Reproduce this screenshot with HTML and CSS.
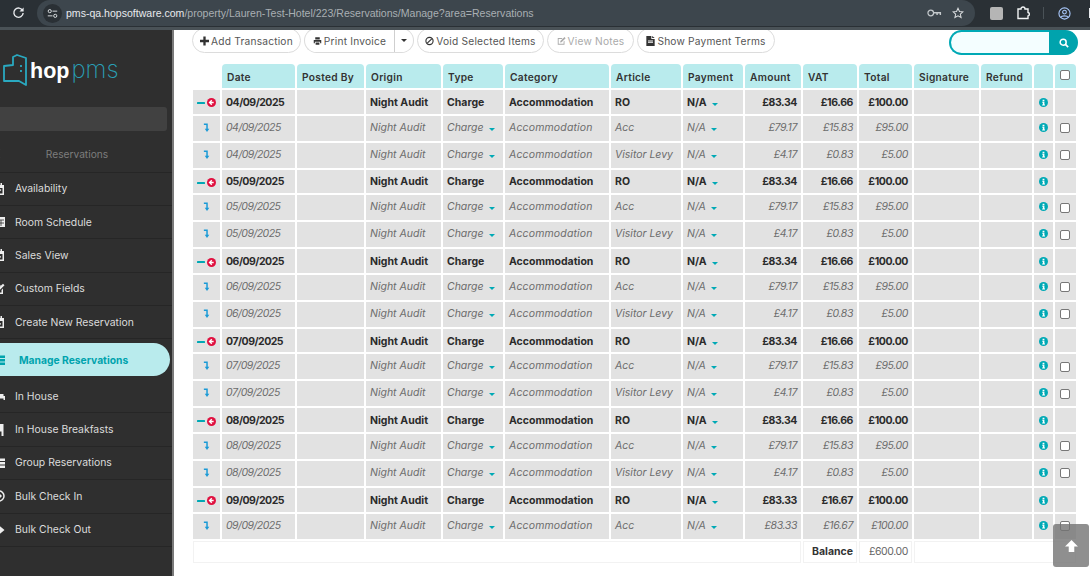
FILE: index.html
```html
<!DOCTYPE html>
<html lang="en">
<head>
<meta charset="utf-8">
<title>Manage Reservations</title>
<link rel="stylesheet" href="styles.css">
</head>
<body>
<svg class="defs" width="0" height="0" aria-hidden="true">
  <symbol id="i-minus" viewBox="0 0 8 8"><rect x="0" y="3" width="8" height="2" rx=".5" fill="#00a9b5"/></symbol>
  <symbol id="i-back" viewBox="0 0 10 10"><circle cx="5" cy="5" r="5" fill="#e0103f"/><path d="M5.3 2.4 2.8 5l2.5 2.6M3 5h4.4" fill="none" stroke="#fff" stroke-width="1.5"/></symbol>
  <symbol id="i-turn" viewBox="0 0 8 10"><path d="M1 1.2h3.6v6" fill="none" stroke="#1b9ad6" stroke-width="1.7"/><path d="M2 6.5h5.2L4.6 10z" fill="#1b9ad6"/></symbol>
  <symbol id="i-info" viewBox="0 0 10 10"><circle cx="5" cy="5" r="5" fill="#00a9b5"/><path d="M4 2h2v1.500H4zM3.600 4.200H6v3h.7v1H3.500v-1h.8v-2h-.7z" fill="#fff"/></symbol>
  <symbol id="i-cal" viewBox="0 0 12 12"><path d="M1 2h10v10H1zM3 0h1.500v3H3zM7.500 0H9v3H7.500z" fill="#eee"/><rect x="2.500" y="5" width="7" height="5.500" fill="#2f2f2f"/><path d="m4 7.500 1.500 1.500L8 6.500" fill="none" stroke="#eee" stroke-width="1.200"/></symbol>
  <symbol id="i-plus-cal" viewBox="0 0 12 12"><path d="M1 2h10v10H1zM3 0h1.500v3H3zM7.500 0H9v3H7.500z" fill="#eee"/><rect x="2.500" y="5" width="7" height="5.500" fill="#2f2f2f"/><path d="M6 5.800v4M4 7.800h4" stroke="#eee" stroke-width="1.200"/></symbol>
  <symbol id="i-grid" viewBox="0 0 12 12"><path d="M0 1h12v10H0z" fill="#eee"/><path d="M1 4h10M1 7h10M4 4v6M8 4v6" stroke="#2f2f2f" stroke-width=".8"/></symbol>
  <symbol id="i-edit" viewBox="0 0 12 12"><path d="M1 2h7L6.500 3.500H2.500v6h6V7L10 5.500V11H1z" fill="#eee"/><path d="M4.500 6 10 .7 11.500 2.200 6 7.700 4.200 8z" fill="#eee"/></symbol>
  <symbol id="i-list" viewBox="0 0 12 12"><path d="M0 1.500h3v2.500H0zM4 1.500h8v2.500H4zM0 5h3v2.500H0zM4 5h8v2.500H4zM0 8.500h3V11H0zM4 8.500h8V11H4z" fill="currentColor"/></symbol>
  <symbol id="i-bed" viewBox="0 0 12 12"><path d="M0 3h1.500v3H12v4h-1.500V8.500h-9V10H0z" fill="#eee"/><path d="M3 4h7.500v2H3z" fill="#eee"/></symbol>
  <symbol id="i-food" viewBox="0 0 12 12"><path d="M7 0h3.500v12H8.500V7.500H7zM0 0h1v3h.8V0h1v3h.8V0h1v4.500L3.500 6v6h-1.500V6L0 4.500z" fill="#eee"/></symbol>
  <symbol id="i-signin" viewBox="0 0 12 12"><circle cx="6" cy="6" r="5" fill="none" stroke="#eee" stroke-width="1.500"/><path d="M6 3 9 6 6 9zM3 5h3v2H3z" fill="#eee"/></symbol>
  <symbol id="i-signout" viewBox="0 0 12 12"><path d="M6 1.500 11.500 6 6 10.500V8H1V4h5z" fill="#eee"/></symbol>
  <symbol id="i-plus" viewBox="0 0 10 10"><path d="M3.700 0h2.600v3.700H10v2.600H6.300V10H3.700V6.300H0V3.700h3.700z" fill="currentColor"/></symbol>
  <symbol id="i-print" viewBox="0 0 12 12"><path d="M3 1h6v3H3zM1 4.500h10V9H9.500V7h-7v2H1zM3.500 8h5v3h-5z" fill="currentColor"/></symbol>
  <symbol id="i-ban" viewBox="0 0 12 12"><circle cx="6" cy="6" r="4.800" fill="none" stroke="currentColor" stroke-width="1.500"/><path d="M2.700 9.300 9.300 2.700" stroke="currentColor" stroke-width="1.500"/></symbol>
  <symbol id="i-note" viewBox="0 0 12 12"><path d="M1 2h6.500L6.300 3.200H2.200v6.600h6.600V6.700L10 5.500V11H1z" fill="currentColor"/><path d="M4.500 6 10 .7 11.500 2.200 6 7.700 4.200 8z" fill="currentColor"/></symbol>
  <symbol id="i-file" viewBox="0 0 10 12"><path d="M0 0h6v3.500h4V12H0zM7 0l3 2.500H7zM2 5.500h6v1H2zM2 7.500h6v1H2z" fill="currentColor" fill-rule="evenodd"/></symbol>
  <symbol id="i-search" viewBox="0 0 12 12"><circle cx="5" cy="5" r="3.600" fill="none" stroke="#fff" stroke-width="1.800"/><path d="m7.700 7.700 3.300 3.300" stroke="#fff" stroke-width="2"/></symbol>
</svg>

<div class="app">
  <header class="browser">
    <svg class="reload" viewBox="0 0 14 14"><path d="M11.500 5A5 5 0 1 0 12 7.500" fill="none" stroke="#e8eaed" stroke-width="1.500"/><path d="M12.500 1.500v4.500H8z" fill="#e8eaed"/></svg>
    <div class="omnibox">
      <span class="tune"><svg viewBox="0 0 14 14"><circle cx="3.500" cy="4" r="2" fill="none" stroke="#dfe3e6" stroke-width="1.200"/><path d="M7 4h6M1 10h6" stroke="#dfe3e6" stroke-width="1.200"/><circle cx="10.500" cy="10" r="2" fill="none" stroke="#dfe3e6" stroke-width="1.200"/></svg></span>
      <span class="url"><b>pms-qa.hopsoftware.com</b>/property/Lauren-Test-Hotel/223/Reservations/Manage?area=Reservations</span>
      <svg class="omni-icon key" viewBox="0 0 16 10"><circle cx="4" cy="5" r="3" fill="none" stroke="#c4c9cc" stroke-width="1.300"/><path d="M7 4h8v3h-1.500V5.500h-2V7H10V5.500H7z" fill="#c4c9cc"/></svg>
      <svg class="omni-icon star" viewBox="0 0 14 14"><path d="m7 1.500 1.700 3.700 4 .4-3 2.700.9 4L7 10.300l-3.600 2 .9-4-3-2.700 4-.4z" fill="none" stroke="#d9dcde" stroke-width="1.200"/></svg>
    </div>
    <div class="browser-tools">
      <span class="ext-badge"></span>
      <svg class="puzzle" viewBox="0 0 14 14"><path d="M2 3h3a2 2 0 0 1 4 0h3v3.500a1.800 1.800 0 0 1 0 3.500v2.500H2z" fill="none" stroke="#f1f3f4" stroke-width="1.400"/></svg>
      <span class="tool-sep"></span>
      <svg class="profile" viewBox="0 0 14 14"><circle cx="7" cy="7" r="6" fill="none" stroke="#a8c7fa" stroke-width="1.200"/><circle cx="7" cy="5.500" r="2" fill="none" stroke="#a8c7fa" stroke-width="1.200"/><path d="M3 11c1-2 7-2 8 0" fill="none" stroke="#a8c7fa" stroke-width="1.200"/></svg>
      <span class="kebab"></span>
    </div>
  </header>

  <div class="workspace">
    <aside class="sidebar">
      <div class="logo">
        <svg class="logo-mark" viewBox="0 0 24 34"><path d="M1 12 10 11V3l4-2 9 3v27l-7-4H1z" fill="none" stroke="#2aa9c0" stroke-width="1.800" stroke-linejoin="round"/><path d="M18 11v2M18 16v2" stroke="#2aa9c0" stroke-width="1.800"/></svg>
        <span class="logo-hop">hop</span><span class="logo-pms">pms</span>
      </div>
      <div class="side-search"></div>
      <div class="side-title"><span class="chev"></span><span>Reservations</span></div>
      <nav class="menu">
        <a class="menu-item"><svg><use href="#i-cal"/></svg>Availability</a>
        <a class="menu-item"><svg><use href="#i-grid"/></svg>Room Schedule</a>
        <a class="menu-item"><svg><use href="#i-plus-cal"/></svg>Sales View</a>
        <a class="menu-item"><svg><use href="#i-edit"/></svg>Custom Fields</a>
        <a class="menu-item"><svg><use href="#i-plus-cal"/></svg>Create New Reservation</a>
        <a class="menu-item active"><svg><use href="#i-list"/></svg>Manage Reservations</a>
        <a class="menu-item"><svg><use href="#i-bed"/></svg>In House</a>
        <a class="menu-item"><svg><use href="#i-food"/></svg>In House Breakfasts</a>
        <a class="menu-item"><svg><use href="#i-list"/></svg>Group Reservations</a>
        <a class="menu-item"><svg><use href="#i-signin"/></svg>Bulk Check In</a>
        <a class="menu-item"><svg><use href="#i-signout"/></svg>Bulk Check Out</a>
      </nav>
    </aside>

    <main class="content">
      <div class="toolbar">
        <button class="btn add"><svg><use href="#i-plus"/></svg>Add Transaction</button>
        <div class="split">
          <button class="btn split-main"><svg><use href="#i-print"/></svg>Print Invoice</button>
          <button class="btn split-caret"><span class="caret dark"></span></button>
        </div>
        <button class="btn void"><svg><use href="#i-ban"/></svg>Void Selected Items</button>
        <button class="btn notes"><svg><use href="#i-note"/></svg>View Notes</button>
        <button class="btn terms"><svg><use href="#i-file"/></svg>Show Payment Terms</button>
        <div class="search"><span class="search-field"></span><span class="search-btn"><svg><use href="#i-search"/></svg></span></div>
      </div>

      <table class="ledger">
        <colgroup>
          <col class="c0"><col class="c1"><col class="c2"><col class="c3"><col class="c4"><col class="c5"><col class="c6"><col class="c7"><col class="c8"><col class="c9"><col class="c10"><col class="c11"><col class="c12"><col class="c13"><col class="c14">
        </colgroup>
        <thead>
          <tr><th class="blank"></th><th>Date</th><th>Posted By</th><th>Origin</th><th>Type</th><th>Category</th><th>Article</th><th>Payment</th><th>Amount</th><th>VAT</th><th>Total</th><th>Signature</th><th>Refund</th><th></th><th class="chk-head"><span class="check"></span></th></tr>
        </thead>
        <tbody>
          <tr class="group"><td class="ctl"><svg class="minus"><use href="#i-minus"/></svg><svg class="back"><use href="#i-back"/></svg></td><td class="date">04/09/2025</td><td></td><td>Night Audit</td><td>Charge</td><td class="cat">Accommodation</td><td>RO</td><td>N/A<span class="caret"></span></td><td class="num">£83.34</td><td class="num">£16.66</td><td class="num">£100.00</td><td></td><td></td><td class="ctl"><svg class="info"><use href="#i-info"/></svg></td><td></td></tr>
          <tr class="sub"><td class="ctl"><svg class="turn"><use href="#i-turn"/></svg></td><td class="date">04/09/2025</td><td></td><td>Night Audit</td><td>Charge<span class="caret"></span></td><td class="cat">Accommodation</td><td>Acc</td><td>N/A<span class="caret"></span></td><td class="num">£79.17</td><td class="num">£15.83</td><td class="num">£95.00</td><td></td><td></td><td class="ctl"><svg class="info"><use href="#i-info"/></svg></td><td class="ctl"><span class="check"></span></td></tr>
          <tr class="sub"><td class="ctl"><svg class="turn"><use href="#i-turn"/></svg></td><td class="date">04/09/2025</td><td></td><td>Night Audit</td><td>Charge<span class="caret"></span></td><td class="cat">Accommodation</td><td>Visitor Levy</td><td>N/A<span class="caret"></span></td><td class="num">£4.17</td><td class="num">£0.83</td><td class="num">£5.00</td><td></td><td></td><td class="ctl"><svg class="info"><use href="#i-info"/></svg></td><td class="ctl"><span class="check"></span></td></tr>

          <tr class="group"><td class="ctl"><svg class="minus"><use href="#i-minus"/></svg><svg class="back"><use href="#i-back"/></svg></td><td class="date">05/09/2025</td><td></td><td>Night Audit</td><td>Charge</td><td class="cat">Accommodation</td><td>RO</td><td>N/A<span class="caret"></span></td><td class="num">£83.34</td><td class="num">£16.66</td><td class="num">£100.00</td><td></td><td></td><td class="ctl"><svg class="info"><use href="#i-info"/></svg></td><td></td></tr>
          <tr class="sub"><td class="ctl"><svg class="turn"><use href="#i-turn"/></svg></td><td class="date">05/09/2025</td><td></td><td>Night Audit</td><td>Charge<span class="caret"></span></td><td class="cat">Accommodation</td><td>Acc</td><td>N/A<span class="caret"></span></td><td class="num">£79.17</td><td class="num">£15.83</td><td class="num">£95.00</td><td></td><td></td><td class="ctl"><svg class="info"><use href="#i-info"/></svg></td><td class="ctl"><span class="check"></span></td></tr>
          <tr class="sub"><td class="ctl"><svg class="turn"><use href="#i-turn"/></svg></td><td class="date">05/09/2025</td><td></td><td>Night Audit</td><td>Charge<span class="caret"></span></td><td class="cat">Accommodation</td><td>Visitor Levy</td><td>N/A<span class="caret"></span></td><td class="num">£4.17</td><td class="num">£0.83</td><td class="num">£5.00</td><td></td><td></td><td class="ctl"><svg class="info"><use href="#i-info"/></svg></td><td class="ctl"><span class="check"></span></td></tr>

          <tr class="group"><td class="ctl"><svg class="minus"><use href="#i-minus"/></svg><svg class="back"><use href="#i-back"/></svg></td><td class="date">06/09/2025</td><td></td><td>Night Audit</td><td>Charge</td><td class="cat">Accommodation</td><td>RO</td><td>N/A<span class="caret"></span></td><td class="num">£83.34</td><td class="num">£16.66</td><td class="num">£100.00</td><td></td><td></td><td class="ctl"><svg class="info"><use href="#i-info"/></svg></td><td></td></tr>
          <tr class="sub"><td class="ctl"><svg class="turn"><use href="#i-turn"/></svg></td><td class="date">06/09/2025</td><td></td><td>Night Audit</td><td>Charge<span class="caret"></span></td><td class="cat">Accommodation</td><td>Acc</td><td>N/A<span class="caret"></span></td><td class="num">£79.17</td><td class="num">£15.83</td><td class="num">£95.00</td><td></td><td></td><td class="ctl"><svg class="info"><use href="#i-info"/></svg></td><td class="ctl"><span class="check"></span></td></tr>
          <tr class="sub"><td class="ctl"><svg class="turn"><use href="#i-turn"/></svg></td><td class="date">06/09/2025</td><td></td><td>Night Audit</td><td>Charge<span class="caret"></span></td><td class="cat">Accommodation</td><td>Visitor Levy</td><td>N/A<span class="caret"></span></td><td class="num">£4.17</td><td class="num">£0.83</td><td class="num">£5.00</td><td></td><td></td><td class="ctl"><svg class="info"><use href="#i-info"/></svg></td><td class="ctl"><span class="check"></span></td></tr>

          <tr class="group"><td class="ctl"><svg class="minus"><use href="#i-minus"/></svg><svg class="back"><use href="#i-back"/></svg></td><td class="date">07/09/2025</td><td></td><td>Night Audit</td><td>Charge</td><td class="cat">Accommodation</td><td>RO</td><td>N/A<span class="caret"></span></td><td class="num">£83.34</td><td class="num">£16.66</td><td class="num">£100.00</td><td></td><td></td><td class="ctl"><svg class="info"><use href="#i-info"/></svg></td><td></td></tr>
          <tr class="sub"><td class="ctl"><svg class="turn"><use href="#i-turn"/></svg></td><td class="date">07/09/2025</td><td></td><td>Night Audit</td><td>Charge<span class="caret"></span></td><td class="cat">Accommodation</td><td>Acc</td><td>N/A<span class="caret"></span></td><td class="num">£79.17</td><td class="num">£15.83</td><td class="num">£95.00</td><td></td><td></td><td class="ctl"><svg class="info"><use href="#i-info"/></svg></td><td class="ctl"><span class="check"></span></td></tr>
          <tr class="sub"><td class="ctl"><svg class="turn"><use href="#i-turn"/></svg></td><td class="date">07/09/2025</td><td></td><td>Night Audit</td><td>Charge<span class="caret"></span></td><td class="cat">Accommodation</td><td>Visitor Levy</td><td>N/A<span class="caret"></span></td><td class="num">£4.17</td><td class="num">£0.83</td><td class="num">£5.00</td><td></td><td></td><td class="ctl"><svg class="info"><use href="#i-info"/></svg></td><td class="ctl"><span class="check"></span></td></tr>

          <tr class="group"><td class="ctl"><svg class="minus"><use href="#i-minus"/></svg><svg class="back"><use href="#i-back"/></svg></td><td class="date">08/09/2025</td><td></td><td>Night Audit</td><td>Charge</td><td class="cat">Accommodation</td><td>RO</td><td>N/A<span class="caret"></span></td><td class="num">£83.34</td><td class="num">£16.66</td><td class="num">£100.00</td><td></td><td></td><td class="ctl"><svg class="info"><use href="#i-info"/></svg></td><td></td></tr>
          <tr class="sub"><td class="ctl"><svg class="turn"><use href="#i-turn"/></svg></td><td class="date">08/09/2025</td><td></td><td>Night Audit</td><td>Charge<span class="caret"></span></td><td class="cat">Accommodation</td><td>Acc</td><td>N/A<span class="caret"></span></td><td class="num">£79.17</td><td class="num">£15.83</td><td class="num">£95.00</td><td></td><td></td><td class="ctl"><svg class="info"><use href="#i-info"/></svg></td><td class="ctl"><span class="check"></span></td></tr>
          <tr class="sub"><td class="ctl"><svg class="turn"><use href="#i-turn"/></svg></td><td class="date">08/09/2025</td><td></td><td>Night Audit</td><td>Charge<span class="caret"></span></td><td class="cat">Accommodation</td><td>Visitor Levy</td><td>N/A<span class="caret"></span></td><td class="num">£4.17</td><td class="num">£0.83</td><td class="num">£5.00</td><td></td><td></td><td class="ctl"><svg class="info"><use href="#i-info"/></svg></td><td class="ctl"><span class="check"></span></td></tr>

          <tr class="group"><td class="ctl"><svg class="minus"><use href="#i-minus"/></svg><svg class="back"><use href="#i-back"/></svg></td><td class="date">09/09/2025</td><td></td><td>Night Audit</td><td>Charge</td><td class="cat">Accommodation</td><td>RO</td><td>N/A<span class="caret"></span></td><td class="num">£83.33</td><td class="num">£16.67</td><td class="num">£100.00</td><td></td><td></td><td class="ctl"><svg class="info"><use href="#i-info"/></svg></td><td></td></tr>
          <tr class="sub"><td class="ctl"><svg class="turn"><use href="#i-turn"/></svg></td><td class="date">09/09/2025</td><td></td><td>Night Audit</td><td>Charge<span class="caret"></span></td><td class="cat">Accommodation</td><td>Acc</td><td>N/A<span class="caret"></span></td><td class="num">£83.33</td><td class="num">£16.67</td><td class="num">£100.00</td><td></td><td></td><td class="ctl"><svg class="info"><use href="#i-info"/></svg></td><td class="ctl"><span class="check"></span></td></tr>
        </tbody>
        <tfoot>
          <tr class="balance"><td colspan="9"></td><td class="num strong">Balance</td><td class="num">£600.00</td><td colspan="4"></td></tr>
        </tfoot>
      </table>
    </main>
  </div>
</div>
<a class="to-top"><svg viewBox="0 0 14 13"><path d="M7 0 14 7H10V13H4V7H0z" fill="#fff"/></svg></a>
</body>
</html>
```
FILE: styles.css
```css
* { box-sizing: border-box; }
html, body { margin: 0; height: 100%; overflow: hidden; }
body { font-family: Inter, "Open Sans", "Liberation Sans", sans-serif; font-size: 10.5px; color: #333; background: #fff; position: relative; }
.defs { position: absolute; }
svg { display: block; }

.app { display: flex; flex-direction: column; width: 1090px; height: 576px; }

/* browser chrome */
.browser { flex: 0 0 30px; display: flex; align-items: flex-start; background: #2a3035; border-bottom: 3px solid #4a5257; padding-left: 12px; }
.reload { width: 13px; height: 13px; margin: 6px 12px 0 0; flex: none; }
.omnibox { width: 938px; height: 26px; border-radius: 13px; background: #3d464d; display: flex; align-items: center; padding-left: 6px; flex: none; }
.tune { width: 19px; height: 19px; border-radius: 50%; background: #2a3035; display: flex; align-items: center; justify-content: center; flex: none; }
.tune svg { width: 11px; height: 11px; }
.url { margin-left: 4px; font-family: "Liberation Sans", sans-serif; font-size: 10.55px; color: #a9afb3; white-space: nowrap; flex: 1; }
.url b { font-weight: 400; color: #e8eaed; }
.omni-icon { flex: none; }
.key { width: 15px; height: 10px; margin-right: 10px; }
.star { width: 12px; height: 12px; margin-right: 11px; }
.browser-tools { flex: 1; display: flex; align-items: center; height: 26px; }
.ext-badge { width: 13px; height: 13px; margin-left: 15px; background: #b5b5b5; border-radius: 2px; flex: none; }
.puzzle { width: 14px; height: 14px; margin-left: 13px; flex: none; }
.tool-sep { width: 1px; height: 12px; background: #4a5257; margin-left: 13px; flex: none; }
.profile { width: 13px; height: 13px; margin-left: 14px; flex: none; }
.kebab { width: 2px; height: 10px; margin-left: 18px; background: #e8eaed; flex: none; }

.workspace { flex: 1; display: flex; min-height: 0; }

/* sidebar */
.sidebar { flex: 0 0 174px; background: #2f2f2f; border-right: 2px solid #7a7a7a; overflow: hidden; display: flex; flex-direction: column; }
.logo { height: 77px; padding: 24px 0 0 3px; display: flex; align-items: flex-start; }
.logo-mark { width: 24px; height: 34px; flex: none; }
.logo-hop { font-family: "Liberation Sans", sans-serif; font-size: 21.5px; line-height: 30px; margin-top: 2px; font-weight: 700; color: #fff; margin-left: 3px; }
.logo-pms { font-family: Inter, sans-serif; font-size: 24px; line-height: 30px; margin-top: 1px; font-weight: 200; color: #2a9fb5; margin-left: 2px; }
.side-search { width: 167px; height: 24px; background: #414141; border-radius: 0 3px 3px 0; flex: none; }
.side-title { height: 35.5px; margin-top: 6px; padding-bottom: 1.5px; display: flex; align-items: center; justify-content: center; color: #7d7d7d; font-size: 10.2px; padding-right: 18px; border-bottom: 1px solid #262626; position: relative; flex: none; }
.chev { position: absolute; left: -4px; top: 13px; width: 7px; height: 7px; border-left: 1px solid #888; border-bottom: 1px solid #888; transform: rotate(45deg); }
.menu { display: flex; flex-direction: column; }
.menu-item { height: 33.4px; display: flex; align-items: center; gap: 10px; color: #dcdcdc; font-size: 10.4px; border-bottom: 1px solid #262626; white-space: nowrap; }
.menu-item svg { width: 12px; height: 12px; margin-left: -7px; flex: none; color: #eee; }
.menu-item.active { height: 33px; margin: 4px 2px 3.5px 0; background: #b9ebed; color: #00a3ad; font-weight: 700; font-size: 10.3px; border: 0; border-radius: 0 17px 17px 0; gap: 14px; }
.menu-item.active svg { color: #00a3ad; width: 12px; }

/* main */
.content { flex: 1; min-width: 0; padding-left: 17px; overflow: hidden; }
.toolbar { height: 25px; margin: -2px 0 0 1px; display: flex; align-items: stretch; gap: 3px; }
.btn { height: 25px; border: 1px solid #dcdcdc; border-radius: 13px; background: #fff; color: #555; font: 10.2px Inter, sans-serif; letter-spacing: .2px; padding: 0; display: inline-flex; align-items: center; justify-content: center; white-space: nowrap; }
.btn svg { width: 9px; height: 10px; margin-right: 2px; color: #333; flex: none; }
.add { width: 109px; }
.split { display: flex; width: 110px; }
.split-main { flex: 1; border-radius: 13px 0 0 13px; border-right: 1px solid #cfcfcf; }
.split-caret { width: 19px; border-left: 0; border-radius: 0 13px 13px 0; }
.void { width: 127px; }
.notes { width: 87px; color: #aaa; }
.notes svg { color: #aaa; }
.terms { width: 138px; }
.search { width: 129px; height: 25px; margin-left: 171px; margin-top: 2px; display: flex; flex: none; }
.search-field { flex: 1; border: 2px solid #00a9b5; border-right: 0; border-radius: 13px 0 0 13px; background: #f4feff; }
.search-btn { width: 29px; background: #00a3ad; border-radius: 0 13px 13px 0; display: flex; align-items: center; justify-content: center; }
.search-btn svg { width: 10px; height: 10px; }

/* table */
.ledger { table-layout: fixed; width: 887px; border-collapse: separate; border-spacing: 2px; margin-top: 9px; }
.c0 { width: 27px; } .c1 { width: 73px; } .c2 { width: 67px; } .c3 { width: 75px; } .c4 { width: 60px; }
.c5 { width: 104px; } .c6 { width: 70px; } .c7 { width: 60px; } .c8 { width: 56px; } .c9 { width: 54px; }
.c10 { width: 53px; } .c11 { width: 65px; } .c12 { width: 51px; } .c13 { width: 19px; } .c14 { width: 21px; }
.ledger th { height: 24px; padding: 1px 0 0 5px; background: #b9ebed; border-radius: 4px 4px 0 0; text-align: left; font-size: 10.2px; font-weight: 600; letter-spacing: .3px; color: #333; white-space: nowrap; }
.ledger th.blank { background: none; }
.ledger th.chk-head { padding: 0 0 3px 5px; vertical-align: middle; }
.ledger td { background: #e2e2e2; padding: 0 0 0 4px; white-space: nowrap; overflow: hidden; }
.group td { height: 23.6px; padding-top: 1px; font-weight: 700; color: #2b2b2b; font-size: 10.5px; }
.sub td { height: 25px; padding-bottom: 2px; font-style: italic; font-weight: 400; color: #6c6c6c; font-size: 10.5px; }
.ledger td.date { letter-spacing: -.5px; }
.sub td.cat { letter-spacing: .15px; }
.ledger td.num { text-align: right; padding-right: 4px; padding-left: 0; letter-spacing: -.4px; }
.ledger td.ctl { padding-left: 0; padding-right: 0; }
.ctl svg, .ctl .check { margin: 0 auto; }
.ctl { text-align: center; }
.ctl .minus { display: inline-block; width: 8px; height: 8px; margin: 0 2px 0 0; vertical-align: middle; }
.ctl .back { display: inline-block; width: 9px; height: 9px; margin: 0; vertical-align: middle; }
.turn { width: 7px; height: 9px; }
.info { width: 9px; height: 9px; }
.check { display: block; width: 10px; height: 10px; border: 1px solid #777; border-radius: 2px; background: #fff; }
.ledger td.ctl .check { margin: 0 0 0 5px; position: relative; top: 1px; }
.caret { display: inline-block; width: 0; height: 0; margin-left: 5px; vertical-align: 0; border-left: 3.5px solid transparent; border-right: 3.5px solid transparent; border-top: 3.5px solid #00a9b5; }
.caret.dark { border-top-color: #333; margin: 0; }
.balance td { height: 22px; background: #fff; box-shadow: inset 0 0 0 1px #f2f2f2; color: #666; font-weight: 400; font-size: 10.5px; }
.ledger .balance td.strong { font-weight: 700; color: #333; letter-spacing: 0; }

/* back to top */
.to-top { position: absolute; left: 1053px; top: 524px; width: 36px; height: 43px; background: rgba(115, 115, 115, .8); border-radius: 3px; display: flex; align-items: center; justify-content: center; }
.to-top svg { width: 13px; height: 12px; }
```
